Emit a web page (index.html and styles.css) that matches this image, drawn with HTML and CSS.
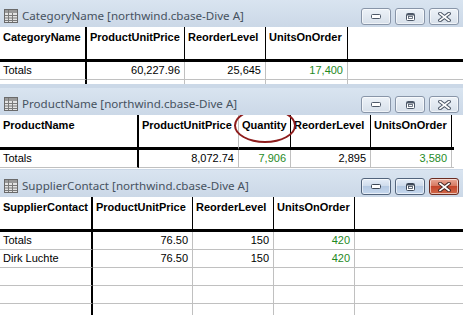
FILE: index.html
```html
<!DOCTYPE html>
<html>
<head>
<meta charset="utf-8">
<link rel="stylesheet" href="styles.css">
</head>
<body>
<div class="desk">

  <div class="win w1">
    <div class="titlebar">
      <svg class="appicon" width="14" height="14" viewBox="0 0 14 14"><rect x="0.5" y="0.5" width="13" height="13" fill="#e4e4e4" stroke="#6a6a6a"/><rect x="1" y="1" width="12" height="3" fill="#9a9a9a"/><path d="M1 6.5H13M1 9H13M1 11.5H13M4.5 1V13M8.5 4V13" stroke="#7a7a7a" stroke-width="1"/></svg>
      <span class="title">CategoryName [northwind.cbase-Dive A]</span>
      <div class="btns">
        <div class="btn"><svg width="10" height="5" viewBox="0 0 10 5"><rect x="0.5" y="0.5" width="9" height="4" rx="1" fill="#fff" stroke="#4d5868"/></svg></div>
        <div class="btn"><svg width="9" height="8" viewBox="0 0 9 8"><rect x="0.5" y="0.5" width="8" height="7" rx="1" fill="#fff" stroke="#4d5868"/><rect x="1" y="1" width="7" height="1.5" fill="#4d5868"/><rect x="2.5" y="3.5" width="4" height="2" fill="#fff" stroke="#4d5868" stroke-width="0.8"/></svg></div>
        <div class="btn"><svg width="13" height="10" viewBox="0 0 13 10"><path d="M2 1.5L11 8.5M11 1.5L2 8.5" stroke="#4d5868" stroke-width="3.6" stroke-linecap="square"/><path d="M2 1.5L11 8.5M11 1.5L2 8.5" stroke="#fff" stroke-width="1.6" stroke-linecap="square"/></svg></div>
      </div>
    </div>
    <div class="body">
      <div class="row head g1">
        <div class="c first">CategoryName</div>
        <div class="c">ProductUnitPrice</div>
        <div class="c">ReorderLevel</div>
        <div class="c">UnitsOnOrder</div>
        <div class="c last"></div>
      </div>
      <div class="row data g1">
        <div class="c first">Totals</div>
        <div class="c num">60,227.96</div>
        <div class="c num">25,645</div>
        <div class="c num green">17,400</div>
        <div class="c last"></div>
      </div>
      <div class="row data g1">
        <div class="c first"></div>
        <div class="c"></div>
        <div class="c"></div>
        <div class="c"></div>
        <div class="c last"></div>
      </div>
    </div>
  </div>

  <div class="win w2">
    <div class="titlebar">
      <svg class="appicon" width="14" height="14" viewBox="0 0 14 14"><rect x="0.5" y="0.5" width="13" height="13" fill="#e4e4e4" stroke="#6a6a6a"/><rect x="1" y="1" width="12" height="3" fill="#9a9a9a"/><path d="M1 6.5H13M1 9H13M1 11.5H13M4.5 1V13M8.5 4V13" stroke="#7a7a7a" stroke-width="1"/></svg>
      <span class="title">ProductName [northwind.cbase-Dive A]</span>
      <div class="btns">
        <div class="btn"><svg width="10" height="5" viewBox="0 0 10 5"><rect x="0.5" y="0.5" width="9" height="4" rx="1" fill="#fff" stroke="#4d5868"/></svg></div>
        <div class="btn"><svg width="9" height="8" viewBox="0 0 9 8"><rect x="0.5" y="0.5" width="8" height="7" rx="1" fill="#fff" stroke="#4d5868"/><rect x="1" y="1" width="7" height="1.5" fill="#4d5868"/><rect x="2.5" y="3.5" width="4" height="2" fill="#fff" stroke="#4d5868" stroke-width="0.8"/></svg></div>
        <div class="btn"><svg width="13" height="10" viewBox="0 0 13 10"><path d="M2 1.5L11 8.5M11 1.5L2 8.5" stroke="#4d5868" stroke-width="3.6" stroke-linecap="square"/><path d="M2 1.5L11 8.5M11 1.5L2 8.5" stroke="#fff" stroke-width="1.6" stroke-linecap="square"/></svg></div>
      </div>
    </div>
    <div class="body">
      <div class="grid2">
        <div class="row head g2">
          <div class="c first">ProductName</div>
          <div class="c soft">ProductUnitPrice</div>
          <div class="c">Quantity</div>
          <div class="c">ReorderLevel</div>
          <div class="c">UnitsOnOrder</div>
          <div class="c last"></div>
        </div>
        <div class="row data g2">
          <div class="c first">Totals</div>
          <div class="c num">8,072.74</div>
          <div class="c num green">7,906</div>
          <div class="c num">2,895</div>
          <div class="c num green">3,580</div>
          <div class="c last"></div>
        </div>
      </div>
      <div class="ring"></div>
    </div>
  </div>

  <div class="win w3">
    <div class="titlebar">
      <svg class="appicon" width="14" height="14" viewBox="0 0 14 14"><rect x="0.5" y="0.5" width="13" height="13" fill="#e4e4e4" stroke="#6a6a6a"/><rect x="1" y="1" width="12" height="3" fill="#9a9a9a"/><path d="M1 6.5H13M1 9H13M1 11.5H13M4.5 1V13M8.5 4V13" stroke="#7a7a7a" stroke-width="1"/></svg>
      <span class="title">SupplierContact [northwind.cbase-Dive A]</span>
      <div class="btns">
        <div class="btn act"><svg width="10" height="5" viewBox="0 0 10 5"><rect x="0.5" y="0.5" width="9" height="4" rx="1" fill="#fff" stroke="#3b4656"/></svg></div>
        <div class="btn act"><svg width="9" height="8" viewBox="0 0 9 8"><rect x="0.5" y="0.5" width="8" height="7" rx="1" fill="#fff" stroke="#3b4656"/><rect x="1" y="1" width="7" height="1.5" fill="#3b4656"/><rect x="2.5" y="3.5" width="4" height="2" fill="#fff" stroke="#3b4656" stroke-width="0.8"/></svg></div>
        <div class="btn close"><svg width="13" height="10" viewBox="0 0 13 10"><path d="M2 1.5L11 8.5M11 1.5L2 8.5" stroke="#4a2a26" stroke-width="3.6" stroke-linecap="square"/><path d="M2 1.5L11 8.5M11 1.5L2 8.5" stroke="#fff" stroke-width="1.6" stroke-linecap="square"/></svg></div>
      </div>
    </div>
    <div class="body">
      <div class="row head g3">
        <div class="c first">SupplierContact</div>
        <div class="c">ProductUnitPrice</div>
        <div class="c">ReorderLevel</div>
        <div class="c">UnitsOnOrder</div>
        <div class="c last"></div>
      </div>
      <div class="row data g3">
        <div class="c first">Totals</div>
        <div class="c num">76.50</div>
        <div class="c num">150</div>
        <div class="c num green">420</div>
        <div class="c last"></div>
      </div>
      <div class="row data g3">
        <div class="c first">Dirk Luchte</div>
        <div class="c num">76.50</div>
        <div class="c num">150</div>
        <div class="c num green">420</div>
        <div class="c last"></div>
      </div>
      <div class="row data g3">
        <div class="c first"></div><div class="c"></div><div class="c"></div><div class="c"></div><div class="c last"></div>
      </div>
      <div class="row data g3">
        <div class="c first"></div><div class="c"></div><div class="c"></div><div class="c"></div><div class="c last"></div>
      </div>
      <div class="row data g3">
        <div class="c first"></div><div class="c"></div><div class="c"></div><div class="c"></div><div class="c last"></div>
      </div>
    </div>
  </div>

</div>
</body>
</html>
```

FILE: styles.css
```css
html, body {
  margin: 0;
  padding: 0;
  background: #c6d5e6;
  overflow: hidden;
}
.desk {
  width: 463px;
  height: 315px;
  display: flex;
  flex-direction: column;
  overflow: hidden;
}
.win {
  flex: none;
  display: flex;
  flex-direction: column;
  background: #cbd8e7;
  overflow: hidden;
}
.w1 { height: 88px; }
.w2 { height: 82px; }
.w3 { flex: 1; }

.titlebar {
  height: 27px;
  flex: none;
  display: flex;
  align-items: center;
  padding: 0 4px 0 4px;
  background: linear-gradient(#d9e4f0, #cbd8e7);
}
.appicon { flex: none; margin-right: 4px; margin-top: 4px; }
.title {
  font-family: "Noto Sans", "Open Sans", sans-serif;
  font-size: 11.6px;
  color: #46525f;
  white-space: nowrap;
  margin-top: 4px;
  flex: 1;
  overflow: hidden;
}
.btns {
  display: flex;
  gap: 4px;
  margin-top: 6px;
  align-self: flex-start;
  padding-top: 2px;
}
.btn {
  width: 28px;
  height: 15px;
  border: 1px solid #8895a8;
  border-radius: 3px;
  background: linear-gradient(#edf2f8, #d7e0ea);
  display: flex;
  align-items: center;
  justify-content: center;
  box-shadow: inset 0 0 0 1px rgba(255,255,255,0.6);
}
.btn.act {
  border-color: #52647c;
  background: linear-gradient(#e6eef8 0%, #cfdcec 45%, #b5c9e2 50%, #c6d8ee 100%);
}
.btn.close {
  border-color: #6a2c22;
  background: linear-gradient(#e9a897 0%, #d77a62 45%, #c4452b 50%, #d0694a 100%);
}

.body {
  background: #fff;
  position: relative;
  overflow: hidden;
  font-family: "Liberation Sans", Arial, sans-serif;
  font-size: 11px;
  color: #000;
}
.w1 .body { height: 57px; flex: none; }
.w2 .body { height: 54px; flex: none; }
.w3 .body { flex: 1; }

.row { display: grid; }
.g1 { grid-template-columns: 87px 98px 81px 82px 1fr; }
.g2 { grid-template-columns: 139px 100px 52px 80px 81px 2px; }
.g3 { grid-template-columns: 93px 100px 81px 81px 1fr; }
.grid2 { width: 454px; }

.c {
  box-sizing: border-box;
  padding: 0 3px;
  white-space: nowrap;
  overflow: hidden;
}
.head .c {
  height: 35px;
  padding-top: 3px;
  line-height: 14px;
  font-weight: bold;
  border-right: 1px solid #000;
  border-bottom: 3px solid #000;
}
.head .c.soft { border-right-color: #c0c0c0; }
.head .c.last { border-right: none; padding: 0; }
.data .c {
  height: 18px;
  line-height: 17px;
  border-right: 1px solid #c0c0c0;
  border-bottom: 1px solid #c0c0c0;
}
.data .c.last { border-right: none; }
.g2 .c.last { padding: 0; }
.row .c.first { border-right: 2px solid #000; }
.num { text-align: right; padding-right: 4px; }
.green { color: #1f8a1f; }

.ring {
  position: absolute;
  left: 234px;
  top: -7px;
  width: 58px;
  height: 31px;
  border: 2px solid #8e1d1d;
  border-radius: 50%;
}
```
